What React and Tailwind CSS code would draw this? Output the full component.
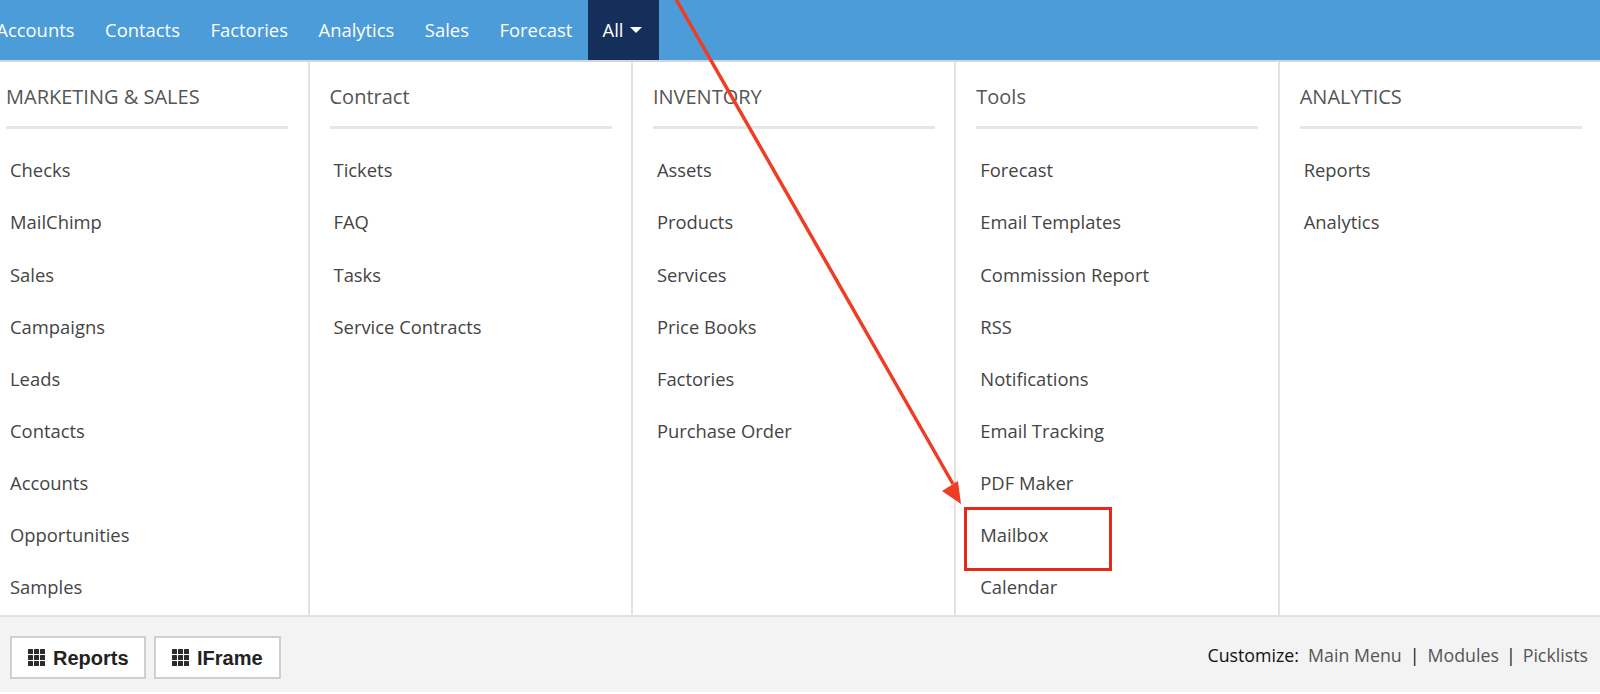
const navItems = ["Accounts", "Contacts", "Factories", "Analytics", "Sales", "Forecast"];

const columns = [
  {
    title: "MARKETING & SALES",
    items: ["Checks", "MailChimp", "Sales", "Campaigns", "Leads", "Contacts", "Accounts", "Opportunities", "Samples"],
  },
  { title: "Contract", items: ["Tickets", "FAQ", "Tasks", "Service Contracts"] },
  { title: "INVENTORY", items: ["Assets", "Products", "Services", "Price Books", "Factories", "Purchase Order"] },
  {
    title: "Tools",
    items: ["Forecast", "Email Templates", "Commission Report", "RSS", "Notifications", "Email Tracking", "PDF Maker", "Mailbox", "Calendar"],
  },
  { title: "ANALYTICS", items: ["Reports", "Analytics"] },
];

function GridIcon() {
  return (
    <svg width="17" height="17" viewBox="0 0 17 17" fill="#2b2b2b">
      {[0, 6, 12].map((y) =>
        [0, 6, 12].map((x) => <rect key={`${x}-${y}`} x={x} y={y} width="5" height="5" rx="0.5" />)
      )}
    </svg>
  );
}

function ToolButton({ label, className }) {
  return (
    <button className={`flex h-[43px] items-center gap-[8px] border-2 border-[#cfcfcf] bg-white text-[20px] font-bold text-[#222] font-['Liberation_Sans',sans-serif] ${className}`}>
      <GridIcon />
      {label}
    </button>
  );
}

export default function App() {
  return (
    <div className="relative h-[694px] w-[1600px] overflow-hidden bg-white font-['Open_Sans',sans-serif]">
      {/* Top nav */}
      <div className="flex h-[60px] items-stretch bg-[#4b9cd9] text-[18.4px] text-white">
        <div className="ml-[-19px] flex">
          {navItems.map((n) => (
            <a key={n} className="flex items-center px-[15.3px]">{n}</a>
          ))}
          <a className="flex w-[71px] items-center gap-[7px] bg-[#152f5b] pl-[15px]">
            All
            <span className="h-0 w-0 border-x-[6px] border-t-[6px] border-x-transparent border-t-white" />
          </a>
        </div>
      </div>
      <div className="h-[2px] bg-[#d4d4d4]" />

      {/* Menu columns */}
      <div className="flex h-[555px] border-b-2 border-[#e2e2e2]">
        {columns.map((col, i) => (
          <div
            key={col.title}
            className={`shrink-0 ${i === 0 ? "w-[309.5px] pl-[6px]" : "w-[323.4px] pl-[20px]"} ${i < 4 ? "border-r-2 border-[#e2e2e2]" : ""}`}
          >
            <div className="flex h-[67px] w-[282px] items-center border-b-[3px] border-[#e6e6e6] pt-[5px] text-[20px] text-[#555]">
              {col.title}
            </div>
            <ul className="pt-[15px]">
              {col.items.map((item) => (
                <li key={item} className="flex h-[52.15px] items-center pl-[4px] text-[18.4px] text-[#444]">{item}</li>
              ))}
            </ul>
          </div>
        ))}
      </div>

      {/* Footer */}
      <div className="flex h-[75px] items-start justify-between bg-[#f3f3f3] pl-[10px] pr-[12px] pt-[19px]">
        <div className="flex gap-[8px]">
          <ToolButton label="Reports" className="w-[136px] pl-[16px]" />
          <ToolButton label="IFrame" className="w-[127px] pl-[16px]" />
        </div>
        <div className="flex items-center pt-[6px] text-[17.8px] text-[#555]">
          <span className="mr-[9px] text-[#111]">Customize:</span>
          <span>Main Menu</span>
          <span className="mx-[8px] text-[#222]">|</span>
          <span>Modules</span>
          <span className="mx-[7px] text-[#222]">|</span>
          <span>Picklists</span>
        </div>
      </div>

      {/* Annotation over the screenshot */}
      <div className="absolute left-[964px] top-[507px] h-[64px] w-[148px] border-[3px] border-[#e5281a]" />
      <svg className="absolute left-0 top-0" width="1600" height="694" fill="none">
        <line x1="673" y1="-6" x2="953" y2="484" stroke="#ee3d24" strokeWidth="3.5" />
        <polygon points="961,504 942,491 958,481" fill="#ee3d24" />
      </svg>
    </div>
  );
}
